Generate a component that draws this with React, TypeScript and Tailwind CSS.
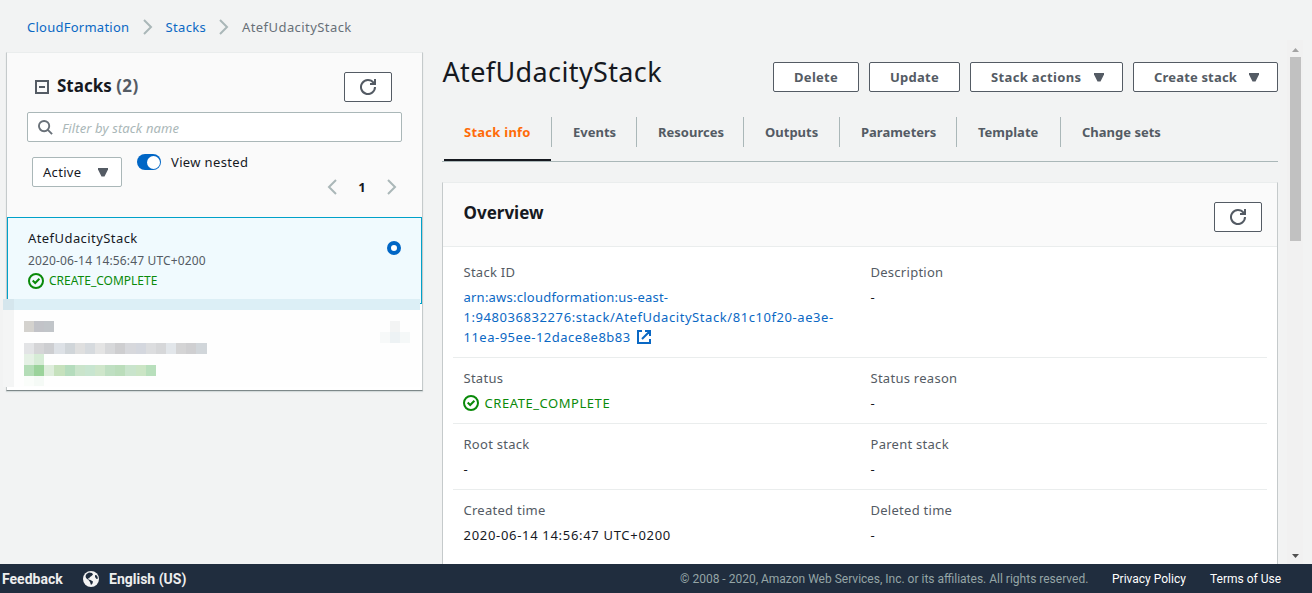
import React from "react";

const Caret = ({ className = "" }: { className?: string }) => (
  <svg viewBox="0 0 10 9" className={"h-[9px] w-[10px] shrink-0 " + className} fill="#545b64">
    <path d="M0 0h10v1.500L6.500 8.500h-3L0 1.500z" />
  </svg>
);

const Refresh = () => (
  <svg viewBox="0 0 16 16" className="h-4 w-4" fill="none" stroke="#545b64" strokeWidth="2">
    <path d="M10 5h5V0" />
    <path d="M15 8a7 7 0 1 1-1.500-4.300L15 5" />
  </svg>
);

const RefreshButton = () => (
  <button className="flex h-[30px] w-12 items-center justify-center rounded-[2px] border border-[#545b64] bg-white">
    <Refresh />
  </button>
);

const Check = () => (
  <svg viewBox="0 0 16 16" className="h-4 w-4 shrink-0" fill="none" stroke="#0a8a0a" strokeWidth="2">
    <circle cx="8" cy="8" r="7" />
    <path d="M4.700 7.500l2.500 2.500 4.200-4.200" />
  </svg>
);

const Chevron = ({ left = false, className = "" }: { left?: boolean; className?: string }) => (
  <svg viewBox="0 0 10 16" className={"h-4 w-[10px] shrink-0 " + className} fill="none" stroke="#aab7b8" strokeWidth="2">
    <path d={left ? "M9 1L2 8l7 7" : "M1 1l7 7-7 7"} />
  </svg>
);

const tabs = [
  { label: "Events", box: "w-[85px]" },
  { label: "Resources", box: "w-[107px]" },
  { label: "Outputs", box: "w-[96px]" },
  { label: "Parameters", box: "w-[117px]" },
  { label: "Template", box: "w-[104px]" },
  { label: "Change sets", box: "w-[121px]" },
];

const ActionButton = ({ label, box, caret = false }: { label: string; box: string; caret?: boolean }) => (
  <button className={"flex h-[30px] items-center justify-between rounded-[2px] border border-[#545b64] bg-white pl-[20px] text-[13px] font-bold whitespace-nowrap text-[#545b64] " + (caret ? "pr-[18px] " : "pr-[18px] ") + box}>
    <span>{label}</span>
    {caret && <Caret />}
  </button>
);

const Field = ({ label, children }: { label: string; children: React.ReactNode }) => (
  <div className="w-[407px] shrink-0 pl-[10.500px]">
    <div className="h-5 tracking-[0.27px] text-[#545b64]">{label}</div>
    <div className="mt-[5px] text-[#16191f]">{children}</div>
  </div>
);

const greys = ["#e3e4e6", "#d5d5d7", "#cdced1", "#dde1e6", "#d0d5d9", "#dfdfdf", "#d6dade", "#e4e4e4", "#d7d8da", "#ceced0", "#d7d8dc", "#d4d7de", "#dcdddf", "#d6d7d9", "#e2e6ea", "#d4d4d5", "#cfcfd1", "#d1d6da"];
const greens = ["#b4ddb7", "#9bd39b", "#deeddc", "#c6e1bd", "#b5dcbd", "#cae4cb", "#c8e5d0", "#cfe6cb", "#bfdfc2", "#bbddbb", "#c9e4cc", "#cbe5c5", "#b8dfbc"];

const Mosaic = ({ colors, className }: { colors: string[]; className: string }) => (
  <div className={"flex " + className}>
    {colors.map((color, i) => (
      <span key={i} className="h-full w-[10.150px] shrink-0" style={{ backgroundColor: color }} />
    ))}
  </div>
);

export default function App() {
  return (
    <div className="flex h-[593px] w-[1312px] flex-col overflow-hidden bg-[#f2f3f3] font-['Noto_Sans','Open_Sans',sans-serif] text-[13px] leading-5 text-[#16191f]">
      <div className="flex h-[564px]">
        <aside className="w-[430px] shrink-0">
          <nav className="flex h-[52px] items-center pt-[2px] pl-[27px] text-[#0a68c4]">
            <a className="w-[102px] tracking-[0.250px] whitespace-nowrap">CloudFormation</a>
            <Chevron className="ml-[14px]" />
            <a className="ml-[12.500px] w-[41px] tracking-[0.350px] whitespace-nowrap">Stacks</a>
            <Chevron className="ml-[12px]" />
            <span className="ml-[13.500px] tracking-[0.430px] whitespace-nowrap text-[#687078]">AtefUdacityStack</span>
          </nav>
          <section className="relative ml-[6px] h-[339px] w-[417px] border border-t-[#eaeded] border-r-[#c5cacb] border-b-[#7e8889] border-l-[#c5cacb] bg-white shadow-[0_1px_1px_#d5dbdb]">
            <div className="h-[164px] bg-[#fafafa]">
              <div className="flex h-[59px] items-start pt-[19px] pr-[30px] pl-[28px]">
                <svg viewBox="0 0 14 14" className="mt-2 h-[14px] w-[14px]" fill="none" stroke="#545b64" strokeWidth="2">
                  <path d="M1 1h12v12H1zM4 7h6" />
                </svg>
                <h2 className="mt-1 ml-[8px] text-[17px] font-bold">Stacks <span className="tracking-[0.400px] text-[#545b64]">(2)</span></h2>
                <div className="ml-auto"><RefreshButton /></div>
              </div>
              <div className="ml-5 flex h-[30px] w-[375px] items-center rounded-[2px] border border-[#aab7b8] bg-white pl-[10px]">
                <svg viewBox="0 0 16 16" className="h-[15px] w-[15px]" fill="none" stroke="#687078" strokeWidth="2">
                  <circle cx="6.500" cy="6.500" r="5.500" /><path d="M10.500 10.500L15 15" />
                </svg>
                <span className="ml-[9px] pt-px tracking-[0.120px] text-[#aab7b8] italic">Filter by stack name</span>
              </div>
              <div className="flex">
                <button className="mt-[15px] ml-[25px] flex h-[30px] w-[90px] items-center justify-between rounded-[2px] border border-[#aab7b8] bg-white pr-[13px] pl-[10px]">
                  <span className="tracking-[0.300px]">Active</span><Caret />
                </button>
                <span className="mt-3 ml-[15px] flex h-4 w-6 items-center justify-end rounded-full bg-[#0066c5] pr-px"><span className="h-[13px] w-[13px] rounded-full bg-white" /></span>
                <span className="mt-[10px] ml-[10px] w-[77px] tracking-[0.350px] whitespace-nowrap">View nested</span>
                <div className="mt-[35px] ml-[79px] flex items-center self-start">
                  <Chevron left />
                  <span className="w-[50px] text-center text-[13px] font-bold">1</span>
                  <Chevron />
                </div>
              </div>
            </div>
            <div className="relative h-[87px] border border-[#00a1c9] bg-[#f0fafe] pt-[10px] pl-5">
              <div className="tracking-[0.430px]">AtefUdacityStack</div>
              <div className="mt-[3px] text-[12px] tracking-[0.150px] text-[#545b64]">2020-06-14 14:56:47 UTC+0200</div>
              <div className="flex items-center gap-[5px] text-[12px] text-[#0a8a0a]"><Check />CREATE_COMPLETE</div>
              <span className="absolute top-[23px] right-5 h-[14px] w-[14px] rounded-full border-4 border-[#0066c5] bg-white" />
            </div>
            <div className="absolute top-[246px] -left-1 h-[88px] w-[417px] bg-[#fefefe]">
              <div className="flex h-[11px] bg-[#dceff6]"><span className="w-[11px] bg-[#d5e6ed]" /></div>
              <div className="flex h-[77px]">
                <div className="w-[11px] bg-[#f4f5f5]" />
                <div className="pt-[11px] pl-[10px]">
                  <Mosaic colors={["#d4d2ce", "#c2c3c8", "#c1c5c9"]} className="h-[11px]" />
                  <Mosaic colors={greys} className="mt-[11px] h-[11px]" />
                  <Mosaic colors={["#e5f1e5", "#d6ecd6"]} className="h-[11px]" />
                  <Mosaic colors={greens} className="h-[11px]" />
                  <Mosaic colors={["#fafdfa", "#f5faf6"]} className="h-[10px]" />
                </div>
                <div className="mt-[11px] ml-auto h-[22px] w-[40px]">
                  <div className="mx-[10px] h-[11px] w-[10px] bg-[#f3f4f4]" />
                  <Mosaic colors={["#f7f9f9", "#edf2f4", "#f5f8f8"]} className="h-[11px]" />
                </div>
              </div>
            </div>
          </section>
        </aside>
        <main className="h-[564px] w-[848px] overflow-hidden pl-3">
          <div className="flex h-[116px] items-start pt-[62px]">
            <h1 className="-mt-[3px] w-[331px] pl-[0.500px] text-[27px] leading-[26px] tracking-[0.370px] whitespace-nowrap">AtefUdacityStack</h1>
            <div className="flex gap-[10px] tracking-normal">
              <span className="tracking-[0.300px]"><ActionButton label="Delete" box="w-[86px]" /></span>
              <span className="tracking-[0.250px]"><ActionButton label="Update" box="w-[91px]" /></span>
              <span className="tracking-[0.350px]"><ActionButton label="Stack actions" box="w-[153px] tracking-[0.350px]" caret /></span>
              <span className="tracking-[0.170px]"><ActionButton label="Create stack" box="w-[145px] tracking-[0.170px]" caret /></span>
            </div>
          </div>
          <div className="flex h-[46px] border-b border-[#aab7b8] pl-[2px] font-bold text-[#545b64]">
            <div className="h-[45px] w-[107px] border-b-2 border-[#16191f] pt-[6px] pl-5 tracking-[0.250px] text-[#ff6b08]">Stack info</div>
            {tabs.map((t) => (
              <div key={t.label} className={"mt-px h-[30px] border-l border-[#aab7b8] pt-[5px] pl-[21px] whitespace-nowrap " + t.box}>
                {t.label}
              </div>
            ))}
          </div>
          <section className="mt-5 h-[420px] border border-t-[#eaeded] border-r-[#c5cacb] border-l-[#c5cacb] bg-white">
            <div className="flex h-16 justify-between border-b border-[#eaeded] bg-[#fafafa] pt-[19px] pr-[15px] pl-[20.500px]">
              <h2 className="mt-px text-[17px] font-bold">Overview</h2>
              <RefreshButton />
            </div>
            <div className="px-[10px]">
              <div className="flex h-[111px] border-b border-[#eaeded] pt-[15px]">
                <Field label="Stack ID">
                  <a className="block whitespace-nowrap text-[#0a68c4]">
                    <span className="block tracking-[0.230px]">arn:aws:cloudformation:us-east-</span>
                    <span className="block tracking-[0.570px]">1:948036832276:stack/AtefUdacityStack/81c10f20-ae3e-</span>
                    <span className="flex items-center tracking-[0.500px]">
                      11ea-95ee-12dace8e8b83
                      <svg viewBox="0 0 14 14" className="ml-[6px] h-[14px] w-[14px]" fill="none" stroke="#0a68c4" strokeWidth="2">
                        <path d="M5 1H1v12h12V9M8 1h5v5M13 1L5 9" />
                      </svg>
                    </span>
                  </a>
                </Field>
                <Field label="Description">-</Field>
              </div>
              <div className="flex h-[66px] border-b border-[#eaeded] pt-[10px]">
                <Field label="Status"><span className="-ml-[0.500px] flex items-center gap-[5.500px] tracking-[0.550px] text-[#0a8a0a]"><Check />CREATE_COMPLETE</span></Field>
                <Field label="Status reason">-</Field>
              </div>
              <div className="flex h-[66px] border-b border-[#eaeded] pt-[10px]">
                <Field label="Root stack">-</Field>
                <Field label="Parent stack">-</Field>
              </div>
              <div className="flex h-[66px] pt-[10px]">
                <Field label="Created time"><span className="tracking-[0.690px]">2020-06-14 14:56:47 UTC+0200</span></Field>
                <Field label="Deleted time">-</Field>
              </div>
            </div>
          </section>
        </main>
        <div className="mt-10 ml-[9px] flex h-[524px] w-[16px] flex-col items-center bg-[#f1f1f1]">
          <svg viewBox="0 0 7 4" className="mt-[8px] h-1 w-[7px]" fill="#a3a3a3"><path d="M3.500 0L7 4H0z" /></svg>
          <div className="mt-[5px] h-[184px] w-[11px] bg-[#c1c1c1]" />
          <svg viewBox="0 0 7 4" className="mt-auto mb-[6px] h-1 w-[7px]" fill="#505050"><path d="M0 0h7L3.500 4z" /></svg>
        </div>
      </div>
      <footer className="flex h-[29px] items-center bg-[#202d3e] font-[Roboto,sans-serif] text-[12px] text-white">
        <span className="ml-[2px] w-[61px] text-[14px] font-bold whitespace-nowrap text-[#eeeeee]">Feedback</span>
        <svg viewBox="0 0 16 16" className="ml-5 h-4 w-4">
          <circle cx="8" cy="8" r="8" fill="#f4f4f4" />
          <path d="M3.500 3L6 1.500l3 .5 1 1.500L8.500 5 7 6l-1 1.500-1-.5.500 1.500 2 .5 2.500 1.500-.5 2L8 14l-1-3-1.500-2-2.500-2L2.500 5zM12 4l2 .5 1 3-1.500.5L12 6z" fill="#202d3e" />
        </svg>
        <span className="ml-[10px] text-[14px] font-bold whitespace-nowrap text-[#eeeeee]">English (US)</span>
        <span className="ml-auto w-[408px] whitespace-nowrap text-[#95a5a6]">© 2008 - 2020, Amazon Web Services, Inc. or its affiliates. All rights reserved.</span>
        <span className="ml-6 w-[74px] whitespace-nowrap">Privacy Policy</span>
        <span className="mr-[31px] ml-6 w-[71px] whitespace-nowrap">Terms of Use</span>
      </footer>
    </div>
  );
}
